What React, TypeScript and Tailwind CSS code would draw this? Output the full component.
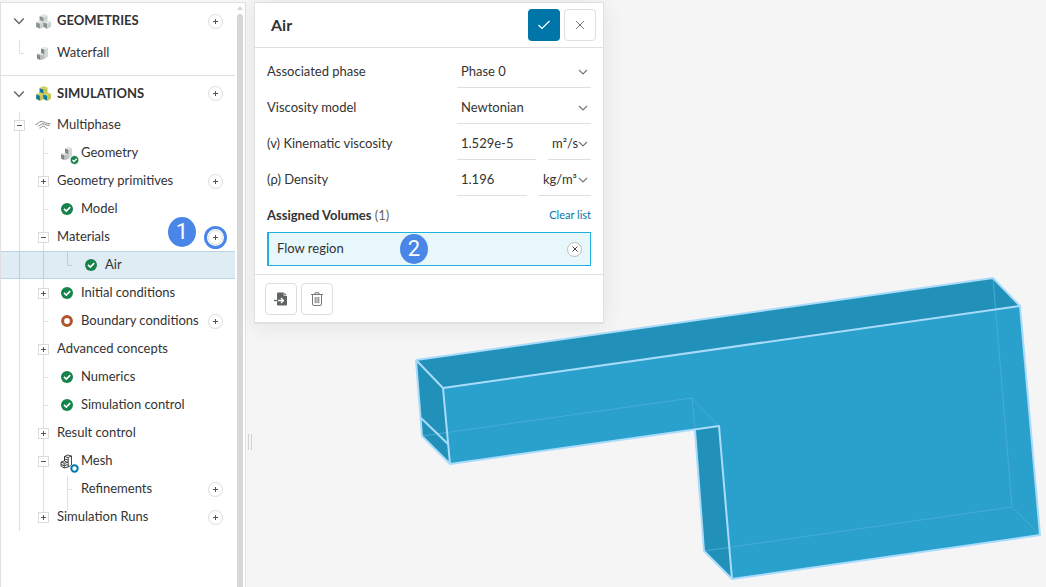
import { useState } from "react";
import type { ReactNode } from "react";
import { clsx } from "clsx";

type Guide = "none" | "line" | "tee" | "elbow" | "branch";
type Expander = "open" | "root" | "closed" | "last";

interface TreeItem {
  label: string;
  guides: Guide[];
  expander?: Expander;
  icon?: ReactNode;
  addable?: boolean;
  selected?: boolean;
  highlighted?: boolean;
}

const guidePaths: Record<Guide, string> = {
  none: "",
  line: "M12.5 0V28",
  tee: "M12.5 0V28M12.5 14.5H17",
  elbow: "M12.5 1V14.5H17",
  branch: "M12.5 1V36M12.5 14.5H17",
};

const expanderPaths: Record<Expander, string> = {
  root: "M12.5 1V28",
  open: "M12.5 0V28",
  closed: "M12.5 0V28",
  last: "M12.5 0V14",
};

function GuideCell({ type, selected }: { type: Guide; selected?: boolean }) {
  return (
    <svg
      className={clsx("h-7 w-6 shrink-0 overflow-visible", selected ? "text-[#bdcdd6]" : "text-[#e0e0e0]")}
      viewBox="0 0 24 28"
      fill="none"
      stroke="currentColor"
      aria-hidden="true"
    >
      <path d={guidePaths[type]} />
    </svg>
  );
}

function ExpanderCell({ type, label }: { type: Expander; label: string }) {
  const open = type === "open" || type === "root";
  return (
    <button aria-label={`Toggle ${label}`} aria-expanded={open} className="h-7 w-6 shrink-0 cursor-pointer">
      <svg viewBox="0 0 24 28" className="h-7 w-6" fill="none" stroke="#e0e0e0">
        <path d={expanderPaths[type]} />
        <rect x="7.5" y="9.5" width="10" height="10" fill="#fff" stroke="#dcdcdc" />
        <path d={open ? "M10 14.5H15" : "M10 14.5H15M12.5 12V17"} stroke="#555" />
      </svg>
    </button>
  );
}

function ChevronDown({ className }: { className?: string }) {
  return (
    <svg viewBox="0 0 10 10" className={className} fill="none" stroke="currentColor" strokeWidth="1.2" aria-hidden="true">
      <path d="M1 3L5 7L9 3" />
    </svg>
  );
}

function CubesIcon({ left, top, right }: { left: string; top: string; right: string }) {
  const cubes = [
    [7.5, 0],
    [4, 6.2],
    [11.2, 6.2],
  ];
  return (
    <svg viewBox="0 0 15 15" className="h-[15px] w-[15px]" aria-hidden="true">
      {cubes.map(([x, y]) => (
        <g key={`${x}-${y}`} transform={`translate(${x} ${y})`}>
          <path d="M0 0L4 1.5L0 3.3L-4 2Z" fill={top} />
          <path d="M0 3.3L4 1.5V6.5L0 8.7L-4 6.8V2Z" fill={right} />
          <path d="M-3.8 2.2L-0.2 3.6V8.2L-3.8 6.5Z" fill={left} />
        </g>
      ))}
    </svg>
  );
}

function SolidShape() {
  return (
    <>
      <path d="M5 2.4L8 1L12 2V10.5L8.5 13L4 14L1 12.5V8L5 7Z" fill="#d3d7d6" />
      <path d="M5 2.4L8.3 3.4V8.4L5 7Z" fill="#7f8886" />
      <path d="M1 8L4.4 9V14L1 12.5Z" fill="#7f8886" />
      <path d="M4.4 9L8.3 8.4V12.8L4.4 14Z" fill="#b9bfbd" />
      <path d="M5 2.4L8 1L12 2L8.3 3.4Z" fill="#e6e9e8" />
      <path d="M1 8L5 7L8.3 8.4L4.4 9.2Z" fill="#e0e3e2" />
    </>
  );
}

function SolidIcon() {
  return (
    <svg viewBox="0 0 14 15" className="h-[15px] w-[14px]" aria-hidden="true">
      <SolidShape />
    </svg>
  );
}

function GeometryIcon() {
  return (
    <svg viewBox="0 0 24 24" className="h-6 w-6 shrink-0" aria-hidden="true">
      <g transform="translate(5 5)">
        <SolidShape />
      </g>
      <circle cx="19.5" cy="19" r="4.5" fill="#16834a" stroke="#fff" />
      <path d="M17.4 18.9L19 20.5L21.7 17.8" stroke="#fff" strokeWidth="1.3" fill="none" />
    </svg>
  );
}

function MeshIcon() {
  return (
    <svg viewBox="0 0 24 24" className="h-6 w-6 shrink-0" fill="none" stroke="#333" strokeWidth="0.9" aria-hidden="true">
      <g transform="translate(5 5)">
        <path d="M4.5 2.5L7.5 1L11.5 2V11L8 13L4 14L1 12V8L4.5 7Z" />
        <path d="M4.5 2.5L8.2 3.5L11.5 2M8.2 3.5V13M4.5 2.5V7L8 8.5M1 8L4.2 9.3L8 8.2M4.2 9.3V14M1 10.5L4.2 11.6L8 10.6M4.5 5L8.2 6" />
      </g>
      <circle cx="19.5" cy="19.5" r="4.5" fill="#fff" stroke="none" />
      <circle cx="19.5" cy="19.5" r="3.2" stroke="#0078ab" strokeWidth="2" />
    </svg>
  );
}

function WavesIcon() {
  return (
    <svg viewBox="0 0 16 10" className="h-[10px] w-4" fill="none" stroke="#6b6f6e" strokeWidth="0.9" aria-hidden="true">
      <path d="M0.5 4.5C3 4.5 3.5 1.5 6.5 1.5S10.5 4 15.5 3.6" />
      <path d="M3.5 5.8C5.5 5.8 6 3.6 8 3.8S11 5.8 14.5 5.4" />
      <path d="M4.5 8C7 8 6.5 6 8.5 6.2S10.5 8.8 12.5 8.6" />
    </svg>
  );
}

function CheckBadge() {
  return (
    <svg viewBox="0 0 12 12" className="h-3 w-3" aria-hidden="true">
      <circle cx="6" cy="6" r="6" fill="#16834a" />
      <path d="M3 5.8L5.3 8L9.2 4.2" stroke="#fff" strokeWidth="1.7" fill="none" />
    </svg>
  );
}

function RingBadge() {
  return (
    <svg viewBox="0 0 12 12" className="h-3 w-3" fill="none" aria-hidden="true">
      <circle cx="6" cy="6" r="4.4" stroke="#b1532c" strokeWidth="3" />
    </svg>
  );
}

function AddButton({ label, highlighted }: { label: string; highlighted?: boolean }) {
  const button = (
    <button
      aria-label={`Add to ${label}`}
      className="flex h-[15px] w-[15px] shrink-0 cursor-pointer items-center justify-center rounded-full border border-[#dcdcdc] bg-white"
    >
      <svg viewBox="0 0 5 5" className="h-[5px] w-[5px]" stroke="#555" aria-hidden="true">
        <path d="M0 2.5H5M2.5 0V5" />
      </svg>
    </button>
  );
  if (!highlighted) return button;
  return (
    <span className="-mr-1 flex h-[23px] w-[23px] items-center justify-center rounded-full border-3 border-[#4a86e8]">
      {button}
    </span>
  );
}

function Marker({ children, className }: { children: ReactNode; className?: string }) {
  return (
    <span
      className={clsx(
        "flex h-[30px] w-7 items-center justify-center rounded-[50%] bg-[#4a86e8] font-['Roboto',sans-serif] text-[22px] leading-none text-white",
        className
      )}
    >
      {children}
    </span>
  );
}

function SectionHeader({ label, icon, className }: { label: string; icon: ReactNode; className?: string }) {
  return (
    <div className={clsx("flex h-9 items-center pl-[6px] pr-3", className)}>
      <button aria-label={`Toggle ${label}`} aria-expanded="true" className="flex w-6 cursor-pointer justify-center text-[#666]">
        <ChevronDown className="h-3 w-3" />
      </button>
      <span className="flex w-6 justify-center">{icon}</span>
      <h2 className="ml-[2px] flex-1 pb-[2px] text-[13px] font-bold">{label}</h2>
      <AddButton label={label} />
    </div>
  );
}

function TreeRow({ item }: { item: TreeItem }) {
  return (
    <li
      className={clsx(
        "relative flex h-7 items-center pl-[6px] pr-3",
        item.selected && "bg-[#dfecf4] shadow-[inset_0_1px_0_#b9d5e5,inset_0_-1px_0_#b9d5e5]"
      )}
    >
      {item.guides.map((guide, i) => (
        <GuideCell key={i} type={guide} selected={item.selected} />
      ))}
      {item.expander && <ExpanderCell type={item.expander} label={item.label} />}
      {item.icon && <span className="flex w-6 shrink-0 justify-center">{item.icon}</span>}
      <span className="ml-[2px] flex-1 whitespace-nowrap pb-[2px]">{item.label}</span>
      {item.highlighted && <Marker className="absolute right-[39px] -top-[6px]">1</Marker>}
      {item.addable && <AddButton label={item.label} highlighted={item.highlighted} />}
    </li>
  );
}

const geometryItems: TreeItem[] = [{ label: "Waterfall", guides: ["elbow"], icon: <SolidIcon /> }];

const simulationItems: TreeItem[] = [
  { label: "Multiphase", guides: [], expander: "root", icon: <WavesIcon /> },
  { label: "Geometry", guides: ["line", "tee"], icon: <GeometryIcon /> },
  { label: "Geometry primitives", guides: ["line"], expander: "closed", addable: true },
  { label: "Model", guides: ["line", "tee"], icon: <CheckBadge /> },
  { label: "Materials", guides: ["line"], expander: "open", addable: true, highlighted: true },
  { label: "Air", guides: ["line", "line", "elbow"], icon: <CheckBadge />, selected: true },
  { label: "Initial conditions", guides: ["line"], expander: "closed", icon: <CheckBadge /> },
  { label: "Boundary conditions", guides: ["line", "tee"], icon: <RingBadge />, addable: true },
  { label: "Advanced concepts", guides: ["line"], expander: "closed" },
  { label: "Numerics", guides: ["line", "tee"], icon: <CheckBadge /> },
  { label: "Simulation control", guides: ["line", "tee"], icon: <CheckBadge /> },
  { label: "Result control", guides: ["line"], expander: "closed" },
  { label: "Mesh", guides: ["line"], expander: "open", icon: <MeshIcon /> },
  { label: "Refinements", guides: ["line", "line", "branch"], addable: true },
  { label: "Simulation Runs", guides: ["line"], expander: "last", addable: true },
];

function Sidebar() {
  return (
    <aside className="mt-[2px] flex w-[246px] shrink-0 border-x border-t border-[#e0e0e0] bg-white">
      <nav className="min-w-0 flex-1">
        <SectionHeader label="GEOMETRIES" icon={<CubesIcon left="#8a9290" top="#e2e5e4" right="#cdd1d0" />} />
        <ul className="pb-2">
          {geometryItems.map((item) => (
            <TreeRow key={item.label} item={item} />
          ))}
        </ul>
        <SectionHeader
          label="SIMULATIONS"
          icon={<CubesIcon left="#0c76a8" top="#d0d15c" right="#c3c750" />}
          className="border-t border-[#e0e0e0]"
        />
        <ul>
          {simulationItems.map((item) => (
            <TreeRow key={item.label} item={item} />
          ))}
        </ul>
      </nav>
      <div className="flex w-[10px] flex-col items-center gap-1 pt-[3px]" aria-hidden="true">
        <svg viewBox="0 0 6 4" className="h-1 w-[6px] shrink-0" fill="#d6d6d6">
          <path d="M3 0L6 4H0Z" />
        </svg>
        <span className="w-[6px] flex-1 rounded-t-full bg-[#d8d8d8]" />
      </div>
    </aside>
  );
}

function FlowVolume() {
  return (
    <svg viewBox="246 0 800 587" className="absolute inset-0 h-full w-full" fill="none" strokeLinejoin="round" aria-label="Flow region">
      <path d="M416 360L993 278L1020 306L443 388Z" fill="#2191b9" />
      <path d="M416 360L443 388L450 464L422 436Z" fill="#2191b9" />
      <path d="M692 398L719 426L732 579L704 551Z" fill="#2191b9" />
      <path d="M443 388L1020 306L1040 535L732 579L719 426L450 464Z" fill="#2aa0cc" />
      <g stroke="#45add6">
        <path d="M422 436L692 398L719 426M692 398L695 430" />
        <path d="M993 278L1012 507L1040 535M1012 507L704 551" />
      </g>
      <g stroke="#a9dbfb" strokeWidth="2">
        <path d="M416 360L993 278L1020 306L1040 535L732 579L704 551L695 430" />
        <path d="M416 360L443 388L1020 306M443 388L450 464L422 436L416 360" />
        <path d="M450 464L719 426L732 579M421 418L448 444" />
      </g>
    </svg>
  );
}

interface SelectProps {
  id: string;
  label?: string;
  options: string[];
  className?: string;
}

function Select({ id, label, options, className }: SelectProps) {
  return (
    <div className={clsx("relative h-9 border-b border-[#dedede]", className)}>
      <select id={id} aria-label={label} className="h-full w-full cursor-pointer appearance-none bg-transparent pl-1 pt-[2px] outline-none">
        {options.map((option) => (
          <option key={option}>{option}</option>
        ))}
      </select>
      <ChevronDown className="pointer-events-none absolute right-[3px] top-[15px] h-[10px] w-[10px] text-[#777]" />
    </div>
  );
}

function Field({ id, label, children }: { id: string; label: string; children: ReactNode }) {
  return (
    <div className="flex h-9 items-center">
      <label htmlFor={id} className="flex-1 pt-[2px]">
        {label}
      </label>
      <div className="flex w-[134px] gap-3">{children}</div>
    </div>
  );
}

const inputClass = "h-9 min-w-0 flex-1 border-b border-[#dedede] bg-transparent pl-1 pt-[3px] outline-none";
const iconButton =
  "flex h-8 w-8 cursor-pointer items-center justify-center rounded border border-[#dedede] bg-white text-[#777]";

function MaterialPanel() {
  const [viscosity, setViscosity] = useState("1.529e-5");
  const [density, setDensity] = useState("1.196");

  return (
    <section className="relative ml-2 mt-[2px] w-[350px] border border-b-2 border-[#e0e0e0] bg-white shadow-[0_2px_20px_rgba(0,0,0,0.08)]">
      <header className="flex h-[45px] items-center gap-1 border-b border-[#e0e0e0] pl-4 pr-[7px]">
        <h1 className="flex-1 text-base font-bold">Air</h1>
        <button aria-label="Apply" className="flex h-8 w-8 cursor-pointer items-center justify-center rounded bg-[#0075a8]">
          <svg viewBox="0 0 12 10" className="h-[10px] w-3" fill="none" stroke="#fff" strokeWidth="1.2">
            <path d="M0.5 5L4 8.5L11.5 1" />
          </svg>
        </button>
        <button aria-label="Close" className={iconButton}>
          <svg viewBox="0 0 10 10" className="h-[10px] w-[10px]" fill="none" stroke="currentColor">
            <path d="M1 1L9 9M9 1L1 9" />
          </svg>
        </button>
      </header>

      <div className="px-3 pb-2 pt-1">
        <Field id="phase" label="Associated phase">
          <Select id="phase" options={["Phase 0", "Phase 1"]} className="flex-1" />
        </Field>
        <Field id="model" label="Viscosity model">
          <Select id="model" options={["Newtonian"]} className="flex-1" />
        </Field>
        <Field id="viscosity" label="(v) Kinematic viscosity">
          <input id="viscosity" className={inputClass} value={viscosity} onChange={(e) => setViscosity(e.target.value)} />
          <Select id="viscosity-unit" label="Viscosity unit" options={["m²/s"]} className="w-[43px]" />
        </Field>
        <Field id="density" label="(ρ) Density">
          <input id="density" className={inputClass} value={density} onChange={(e) => setDensity(e.target.value)} />
          <Select id="density-unit" label="Density unit" options={["kg/m³"]} className="w-[52px]" />
        </Field>

        <div className="flex h-9 items-center justify-between pt-[2px]">
          <h2>
            <b>Assigned Volumes</b> <span className="text-[#666]">(1)</span>
          </h2>
          <button className="cursor-pointer text-[11px] text-[#0078ab]">Clear list</button>
        </div>
        <div className="relative flex h-[34px] items-center justify-between border border-l-2 border-[#1fb2de] bg-[#e8f7fc] px-2">
          <span className="pb-[2px]">Flow region</span>
          <button
            aria-label="Remove Flow region"
            className="flex h-[15px] w-[15px] cursor-pointer items-center justify-center rounded-full border border-[#bbb] bg-white"
          >
            <svg viewBox="0 0 6 6" className="h-[6px] w-[6px]" stroke="#444">
              <path d="M0.5 0.5L5.5 5.5M5.5 0.5L0.5 5.5" />
            </svg>
          </button>
          <Marker className="absolute left-[131px] top-px">2</Marker>
        </div>
      </div>

      <footer className="flex gap-1 border-t border-[#e0e0e0] px-[10px] pb-[7px] pt-2">
        <button aria-label="Import" className={iconButton}>
          <svg viewBox="0 0 14 14" className="h-[14px] w-[14px]" fill="none">
            <path d="M4 0.5H10L13 3.5V12.5Q13 13.5 12 13.5H4Q3 13.5 3 12.5V1.5Q3 0.5 4 0.5Z" fill="#5f6362" />
            <path d="M10 0.5V3.5H13" stroke="#fff" strokeWidth="0.7" />
            <path d="M3 8.5H9M7 6L9.5 8.5L7 11" stroke="#fff" strokeWidth="1.3" />
            <path d="M0 8.5H4" stroke="#5f6362" strokeWidth="1.3" />
          </svg>
        </button>
        <button aria-label="Delete" className={iconButton}>
          <svg viewBox="0 0 12 14" className="h-[14px] w-3" fill="none" stroke="currentColor">
            <path d="M0 2.5H12M4 2.5V0.8H8V2.5M1.5 2.5V12Q1.5 13.5 3 13.5H9Q10.5 13.5 10.5 12V2.5M4.2 5V11.2M6 5V11.2M7.8 5V11.2" />
          </svg>
        </button>
      </footer>
    </section>
  );
}

export default function App() {
  return (
    <div className="flex h-screen overflow-hidden bg-[#f5f5f5] font-['Lato',sans-serif] text-[13px] leading-5 text-[#333]">
      <Sidebar />
      <main className="relative flex min-w-0 flex-1 items-start">
        <FlowVolume />
        <MaterialPanel />
        <span className="absolute left-[2px] top-[434px] h-4 w-1 border-x border-[#cfd3d3]" />
      </main>
    </div>
  );
}
